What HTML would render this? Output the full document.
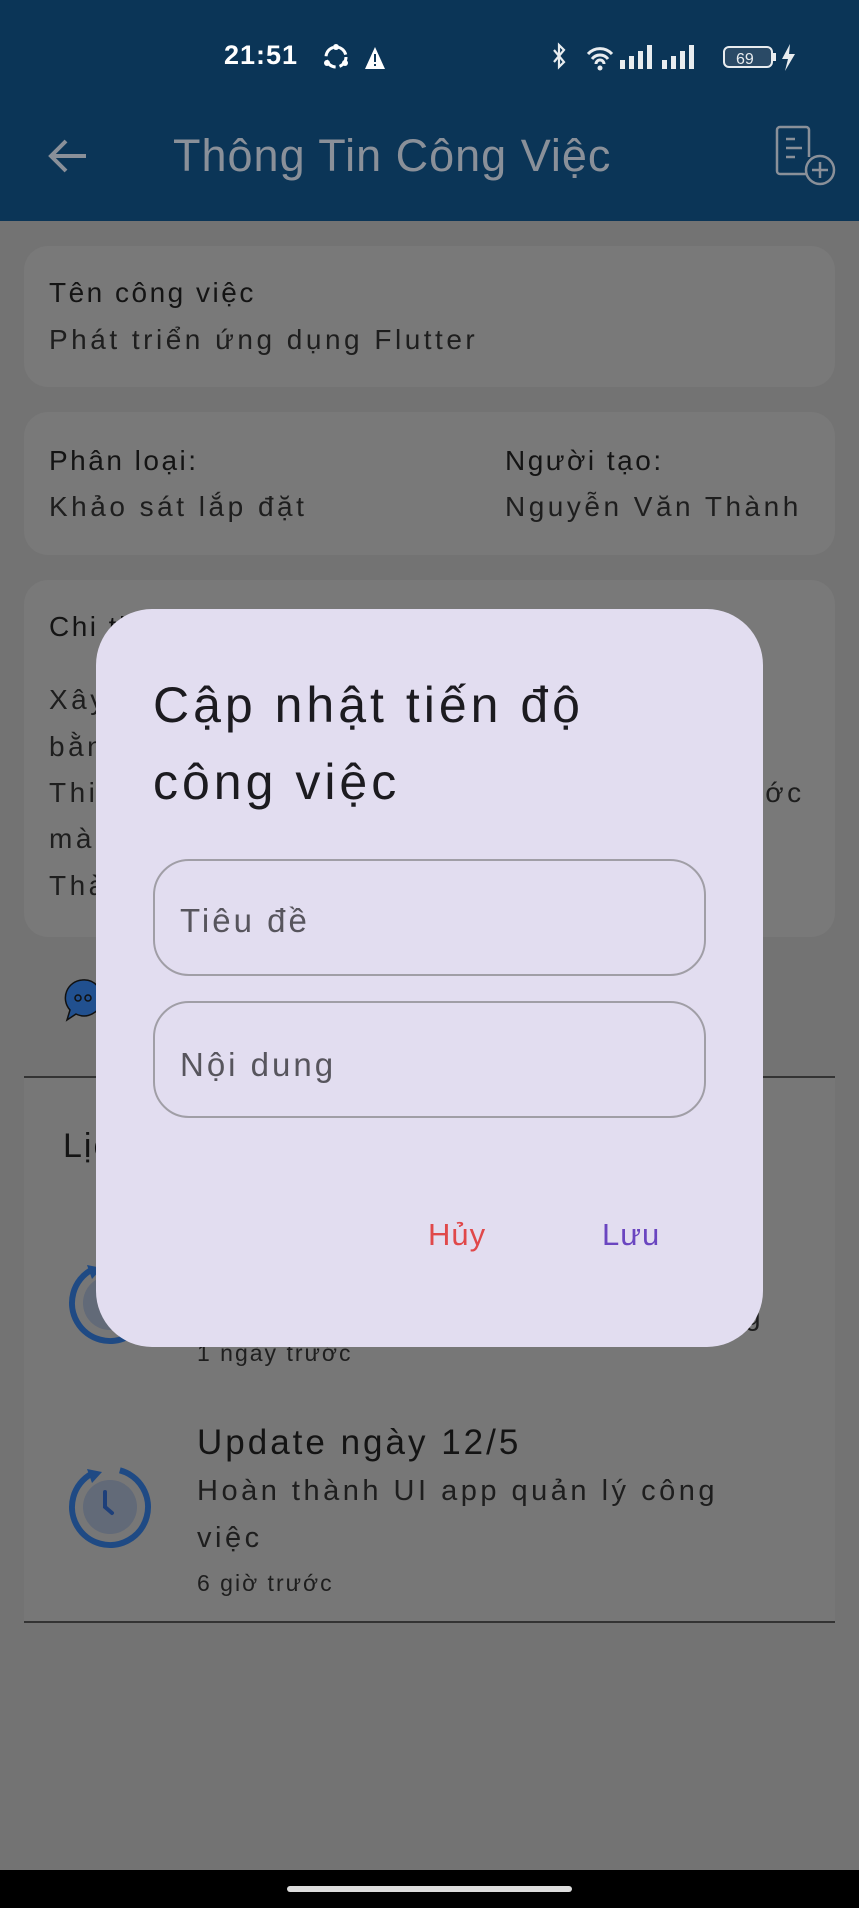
<!DOCTYPE html>
<html><head><meta charset="utf-8"><style>
*{margin:0;padding:0;box-sizing:border-box}
body{width:859px;height:1908px;background:#737373;position:relative;overflow:hidden;font-family:"Liberation Sans",sans-serif}
.abs{position:absolute}
.top{left:0;top:0;width:859px;height:221px;background:#0b3557}
.card{background:#797979;border-radius:24px;left:24px;width:811px}
.t{position:absolute;white-space:nowrap;color:#141414}
.lbl{font-size:28px;letter-spacing:2.5px}
.val{font-size:28px;color:#1e1e1e;letter-spacing:3.5px}
</style></head><body>
<div class="abs top"></div>
<div class="t" style="left:224px;top:40px;font-size:27px;color:#fff;font-weight:bold;letter-spacing:1px">21:51</div>
<svg class="abs" style="left:320px;top:42px" width="70" height="30" viewBox="0 0 70 30">
<circle cx="16" cy="15" r="10" fill="none" stroke="#fff" stroke-width="3" stroke-dasharray="12 4"/>
<circle cx="16" cy="5" r="3" fill="#fff"/><circle cx="7" cy="21" r="3" fill="#fff"/><circle cx="25" cy="21" r="3" fill="#fff"/>
<path d="M45 27 L55 5 L65 27Z" fill="#fff"/><rect x="54" y="12" width="2" height="8" fill="#0b3557"/><rect x="54" y="22" width="2" height="2" fill="#0b3557"/>
</svg>
<svg class="abs" style="left:550px;top:40px" width="260" height="34" viewBox="0 0 260 34">
<path d="M4 10 L14 22 L9 27 L9 5 L14 10 L4 22" fill="none" stroke="#e8ecef" stroke-width="2.2"/>
<path d="M38 14 a16 16 0 0 1 24 0 M42 19 a10 10 0 0 1 16 0 M46 24 a4 4 0 0 1 8 0" fill="none" stroke="#e8ecef" stroke-width="3"/>
<circle cx="50" cy="28" r="2.5" fill="#e8ecef"/>
<rect x="70" y="20" width="5" height="9" fill="#e8ecef"/><rect x="79" y="16" width="5" height="13" fill="#e8ecef"/><rect x="88" y="11" width="5" height="18" fill="#e8ecef"/><rect x="97" y="5" width="5" height="24" fill="#e8ecef"/>
<rect x="112" y="20" width="5" height="9" fill="#e8ecef"/><rect x="121" y="16" width="5" height="13" fill="#e8ecef"/><rect x="130" y="11" width="5" height="18" fill="#e8ecef"/><rect x="139" y="5" width="5" height="24" fill="#e8ecef"/>
<rect x="174" y="7" width="48" height="20" rx="5" fill="#2a4a66" stroke="#e8ecef" stroke-width="2"/>
<text x="186" y="24" font-size="16" fill="#e8ecef" font-family="Liberation Sans">69</text>
<rect x="223" y="13" width="3" height="8" fill="#e8ecef"/>
<path d="M240 4 L232 19 L238 19 L235 31 L245 14 L239 14 Z" fill="#e8ecef"/>
</svg>
<svg class="abs" style="left:46px;top:136px" width="44" height="40" viewBox="0 0 44 40"><path d="M40 20 H6 M20 5 L5 20 L20 35" fill="none" stroke="#8a9099" stroke-width="4"/></svg>
<div class="t" style="left:173px;top:130px;font-size:45px;color:#8a9099;letter-spacing:1px">Thông Tin Công Việc</div>
<svg class="abs" style="left:770px;top:120px" width="70" height="70" viewBox="0 0 70 70">
<path d="M37 54 H10 a3 3 0 0 1 -3 -3 V10 a3 3 0 0 1 3 -3 H36 a3 3 0 0 1 3 3 V37" fill="none" stroke="#8a9099" stroke-width="2.5"/>
<path d="M16 19 H25 M16 28 H32 M16 37 H25" stroke="#8a9099" stroke-width="2.5"/>
<circle cx="50" cy="50" r="14" fill="none" stroke="#8a9099" stroke-width="2.5"/>
<path d="M50 42 V58 M42 50 H58" stroke="#8a9099" stroke-width="2.5"/></svg>

<div class="abs card" style="top:246px;height:141px"></div>
<div class="t lbl" style="left:49px;top:277px">Tên công việc</div>
<div class="t val" style="left:49px;top:324px">Phát triển ứng dụng Flutter</div>
<div class="abs card" style="top:412px;height:143px"></div>
<div class="t lbl" style="left:49px;top:445px">Phân loại:</div>
<div class="t val" style="left:49px;top:491px">Khảo sát lắp đặt</div>
<div class="t lbl" style="left:505px;top:445px">Người tạo:</div>
<div class="t val" style="left:505px;top:491px">Nguyễn Văn Thành</div>
<div class="abs card" style="top:580px;height:357px"></div>
<div class="t lbl" style="left:49px;top:611px">Chi tiết</div>
<div class="t val" style="left:49px;top:684px">Xây</div>
<div class="t val" style="left:49px;top:731px">bằng</div>
<div class="t val" style="left:49px;top:777px">Thi</div>
<div class="t val" style="left:743px;top:777px">ước</div>
<div class="t val" style="left:49px;top:823px">mà</div>
<div class="t val" style="left:49px;top:870px">Thà</div>
<svg class="abs" style="left:62px;top:978px" width="40" height="56" viewBox="0 0 40 56"><path d="M20 2 a18 18 0 1 1 -6 34 L5 42 L8 32 A18 18 0 0 1 20 2Z" fill="#21508f" stroke="#111" stroke-width="1.5"/><circle cx="16" cy="20" r="3" fill="none" stroke="#111" stroke-width="1.5"/><circle cx="26" cy="20" r="3" fill="none" stroke="#111" stroke-width="1.5"/></svg>
<div class="abs" style="left:24px;top:1076px;width:811px;height:2px;background:#333"></div>
<div class="abs" style="left:24px;top:1078px;width:811px;height:544px;background:#777"></div>
<div class="t" style="left:63px;top:1127px;font-size:34px;letter-spacing:2px">Lịch sử</div>
<svg class="abs" style="left:65px;top:1260px" width="90" height="90" viewBox="0 0 90 90"><circle cx="45" cy="43" r="27" fill="#626a78"/><circle cx="45" cy="43" r="38" fill="none" stroke="#1f4a84" stroke-width="6" stroke-dasharray="210 30" transform="rotate(-75 45 43)"/><path d="M22 5 L37 8 L27 19Z" fill="#1f4a84"/></svg>
<div class="t" style="left:745px;top:1300px;font-size:28px;color:#1e1e1e">g</div>
<div class="t" style="left:197px;top:1340px;font-size:23px;color:#1e1e1e;letter-spacing:2px">1 ngày trước</div>
<svg class="abs" style="left:65px;top:1462px" width="90" height="90" viewBox="0 0 90 90"><circle cx="45" cy="45" r="27" fill="#626a78"/><circle cx="45" cy="45" r="38" fill="none" stroke="#1f4a84" stroke-width="6" stroke-dasharray="210 30" transform="rotate(-75 45 45)"/><path d="M22 7 L37 10 L27 21Z" fill="#1f4a84"/><path d="M40 30 V45 L47 51" fill="none" stroke="#1d3f7a" stroke-width="4" stroke-linecap="round"/></svg>
<div class="t" style="left:197px;top:1423px;font-size:35px;letter-spacing:3px">Update ngày 12/5</div>
<div class="t val" style="left:197px;top:1475px;font-size:29px">Hoàn thành UI app quản lý công</div>
<div class="t val" style="left:197px;top:1522px;font-size:29px">việc</div>
<div class="t" style="left:197px;top:1570px;font-size:23px;color:#1e1e1e;letter-spacing:2px">6 giờ trước</div>
<div class="abs" style="left:24px;top:1621px;width:811px;height:2px;background:#333"></div>

<div class="abs" style="left:96px;top:609px;width:667px;height:738px;background:#e2ddf0;border-radius:56px"></div>
<div class="t" style="left:153px;top:676px;font-size:50px;color:#1c1b20;letter-spacing:4px">Cập nhật tiến độ</div>
<div class="t" style="left:153px;top:753px;font-size:50px;color:#1c1b20;letter-spacing:4px">công việc</div>
<div class="abs" style="left:153px;top:859px;width:553px;height:117px;border:2px solid #a09ea6;border-radius:36px"></div>
<div class="t" style="left:180px;top:902px;font-size:33px;color:#57555d;letter-spacing:3px">Tiêu đề</div>
<div class="abs" style="left:153px;top:1001px;width:553px;height:117px;border:2px solid #a09ea6;border-radius:36px"></div>
<div class="t" style="left:180px;top:1046px;font-size:33px;color:#57555d;letter-spacing:3px">Nội dung</div>
<div class="t" style="left:428px;top:1217px;font-size:31px;color:#e0484a;letter-spacing:1px">Hủy</div>
<div class="t" style="left:602px;top:1217px;font-size:31px;color:#6a45c0;letter-spacing:1px">Lưu</div>

<div class="abs" style="left:0;top:1870px;width:859px;height:38px;background:#000"></div>
<div class="abs" style="left:287px;top:1886px;width:285px;height:6px;border-radius:3px;background:#ddd"></div>
</body></html>
